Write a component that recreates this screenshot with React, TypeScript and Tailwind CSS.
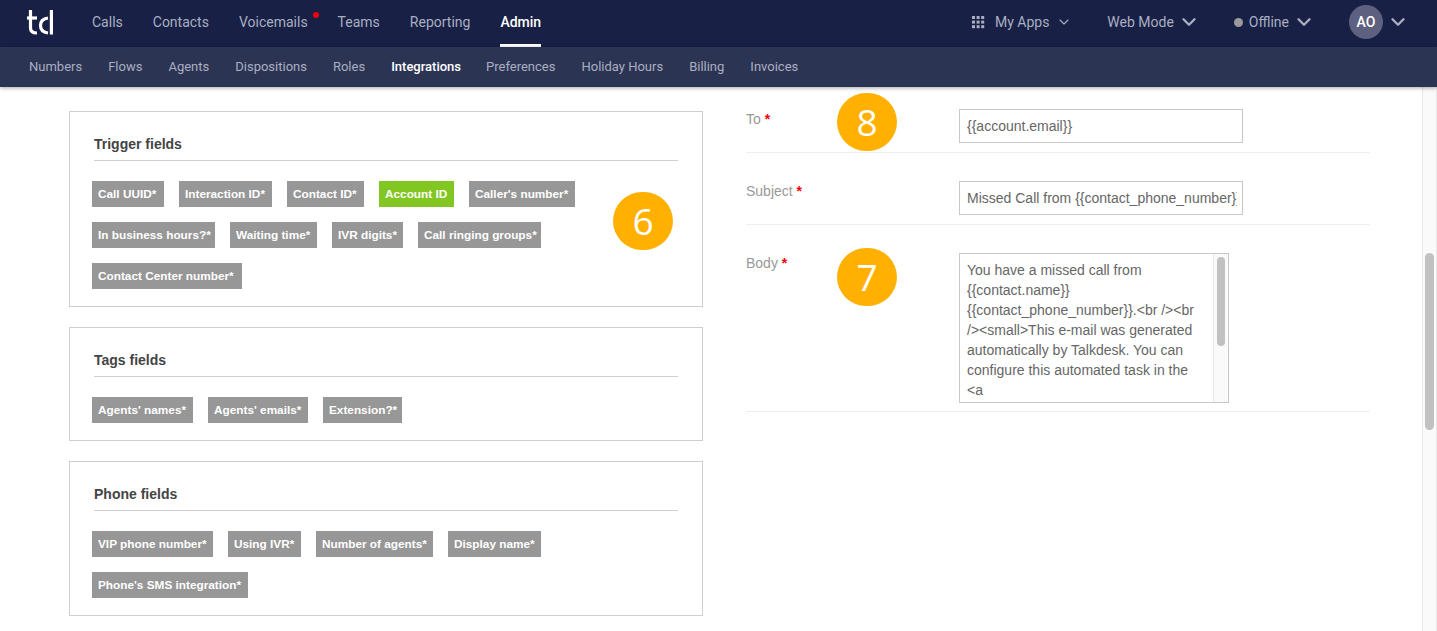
import { ChevronDown } from "lucide-react";

const mainNav = ["Calls", "Contacts", "Voicemails", "Teams", "Reporting", "Admin"];
const subNav = ["Numbers", "Flows", "Agents", "Dispositions", "Roles", "Integrations", "Preferences", "Holiday Hours", "Billing", "Invoices"];

type T = [string, string];

const trigger: T[] = [
  ["Call UUID*", "w-[72px]"],
  ["Interaction ID*", "w-[93px]"],
  ["Contact ID*", "w-[77px]"],
  ["Account ID", "w-[75px]"],
  ["Caller's number*", "w-[106px]"],
  ["In business hours?*", "w-[123px]"],
  ["Waiting time*", "w-[87px]"],
  ["IVR digits*", "w-[71px]"],
  ["Call ringing groups*", "w-[123px]"],
  ["Contact Center number*", "w-[150px]"],
];
const tagsF: T[] = [
  ["Agents' names*", "w-[101px]"],
  ["Agents' emails*", "w-[100px]"],
  ["Extension?*", "w-[79px]"],
];
const phone: T[] = [
  ["VIP phone number*", "w-[121px]"],
  ["Using IVR*", "w-[73px]"],
  ["Number of agents*", "w-[117px]"],
  ["Display name*", "w-[93px]"],
  ["Phone's SMS integration*", "w-[156px]"],
];

function Tag({ label, width, green }: { label: string; width: string; green?: boolean }) {
  return (
    <span className={`h-[26px] pl-[6px] pt-[2px] flex items-center text-[11.8px] font-bold text-white whitespace-nowrap ${width} ${green ? "bg-[#82c622]" : "bg-[#979797]"}`}>
      {label}
    </span>
  );
}

function Box({ title, tags, className }: { title: string; tags: T[]; className: string }) {
  return (
    <section className={`border border-[#cfcfcf] pl-[22px] pr-[24px] pt-[24px] ${className}`}>
      <h3 className="ml-[2px] h-[25px] border-b border-[#cfcfcf] text-[14px] leading-[17px] font-bold text-[#444444]">{title}</h3>
      <div className="mt-[20px] flex flex-wrap gap-x-[15px] gap-y-[15px] w-[510px]">
        {tags.map(([t, w]) => (
          <Tag key={t} label={t} width={w} green={t === "Account ID"} />
        ))}
      </div>
    </section>
  );
}

function Badge({ n, className }: { n: string; className: string }) {
  return (
    <div className={`absolute w-[60px] h-[58px] rounded-full bg-[#ffb000] text-white flex items-center justify-center text-[37px] font-['Open_Sans',sans-serif] ${className}`}>
      {n}
    </div>
  );
}

function Label({ text }: { text: string }) {
  return (
    <label className="w-[213px] shrink-0 text-[14px] leading-[20px] text-[#999999]">
      {text} <span className="text-[#f00000] font-bold">*</span>
    </label>
  );
}

export default function App() {
  return (
    <div className="w-[1437px] h-[631px] overflow-hidden bg-white flex flex-col relative font-['Liberation_Sans',sans-serif]">
      <header className="h-[47px] shrink-0 bg-[#182046] flex items-stretch font-['Roboto',sans-serif] text-[14px] text-[#a9afc0]">
        <svg className="ml-[27px] mt-[10px]" width="26" height="25" viewBox="0 0 26 25" fill="none" stroke="#ffffff" strokeWidth="3.2">
          <path d="M3.5 0 V18 Q3.5 23 10 23" />
          <path d="M0 8 H10" />
          <path d="M21 8 Q13.5 9 13.5 15.5 Q13.5 22 21 23" />
          <path d="M24.4 0 V24.5" />
        </svg>
        <nav className="ml-[39px] flex gap-[30px]">
          {mainNav.map((n) => (
            <a
              key={n}
              className={`relative h-[47px] pt-[13px] leading-[18px] ${n === "Admin" ? "text-white font-medium border-b-[3px] border-white" : ""}`}
            >
              {n}
              {n === "Voicemails" && <span className="absolute right-[-11px] top-[12px] w-[6px] h-[6px] rounded-full bg-[#f0000f]" />}
            </a>
          ))}
        </nav>
        <div className="ml-auto flex items-center pb-[3px]">
          <svg width="13" height="13" viewBox="0 0 13 13" fill="#a9afc0">
            {[0, 4.6, 9.2].flatMap((x) =>
              [0, 4.6, 9.2].map((y) => <rect key={`${x}-${y}`} x={x} y={y} width="3" height="3" />)
            )}
          </svg>
          <span className="ml-[10px]">My Apps</span>
          <ChevronDown className="ml-[7px]" size={16} strokeWidth={1.6} />
          <span className="ml-[35px]">Web Mode</span>
          <ChevronDown className="ml-[4px]" size={22} strokeWidth={2.6} />
          <span className="ml-[34px] w-[9px] h-[9px] rounded-full bg-[#9a9a9a]" />
          <span className="ml-[6px]">Offline</span>
          <ChevronDown className="ml-[4px]" size={22} strokeWidth={2.6} />
          <span className="ml-[34px] w-[34px] h-[34px] rounded-full bg-[#5d617f] text-white flex items-center justify-center font-medium">AO</span>
          <ChevronDown className="ml-[4px] mr-[28px]" size={22} strokeWidth={2.6} />
        </div>
      </header>
      <nav className="h-[40px] shrink-0 bg-[#2c3454] shadow-[0_1px_4px_rgba(0,0,0,0.35)] z-10 flex items-center pl-[29px] gap-[26px] font-['Roboto',sans-serif] text-[13px] text-[#a9afc0]">
        {subNav.map((n) => (
          <a key={n} className={n === "Integrations" ? "text-white font-medium -mr-px" : ""}>
            {n}
          </a>
        ))}
      </nav>
      <div className="flex-1 min-h-0 flex">
        <main className="flex-1 flex min-w-0">
          <div className="ml-[69px] mt-[24px] w-[634px] shrink-0 flex flex-col gap-[20px]">
            <Box className="h-[196px]" title="Trigger fields" tags={trigger} />
            <Box className="h-[114px]" title="Tags fields" tags={tagsF} />
            <Box className="h-[155px]" title="Phone fields" tags={phone} />
          </div>
          <div className="ml-[43px] w-[624px] shrink-0 text-[#666666] text-[14px]">
            <div className="h-[66px] pt-[22px] flex border-b border-[#eeeeee]">
              <Label text="To" />
              <div className="w-[284px] h-[34px] border border-[#c8c8c8] px-[7px] flex items-center pt-[1px]">{"{{account.email}}"}</div>
            </div>
            <div className="h-[72px] pt-[28px] flex border-b border-[#eeeeee]">
              <Label text="Subject" />
              <div className="w-[284px] h-[34px] border border-[#c8c8c8] pl-[7px] pr-[5px] flex items-center overflow-hidden whitespace-nowrap">
                <span className="block overflow-hidden">{"Missed Call from {{contact_phone_number}}"}</span>
              </div>
            </div>
            <div className="h-[187px] pt-[28px] flex border-b border-[#eeeeee]">
              <Label text="Body" />
              <div className="w-[270px] h-[150px] border border-[#c8c8c8] flex overflow-hidden">
                <div className="flex-1 min-w-0 pl-[7px] pr-[10px] pt-[6px] leading-[20px] break-words">
                  You have a missed call from {"{{contact.name}}"} {"{{contact_phone_number}}"}.&lt;br /&gt;&lt;br /&gt;&lt;small&gt;This e-mail was generated automatically by Talkdesk. You can configure this automated task in the &lt;a
                </div>
                <div className="w-[15px] shrink-0 bg-[#fafafa] border-l border-[#e8e8e8] pt-[3px] pl-[3px]">
                  <div className="w-[8px] h-[89px] rounded-full bg-[#c1c1c1]" />
                </div>
              </div>
            </div>
          </div>
        </main>
        <aside className="w-[15px] shrink-0 bg-[#fafafa] border-x border-[#e8e8e8] pl-[2px] pt-[166px]">
          <div className="w-[9px] h-[177px] rounded-full bg-[#c1c1c1]" />
        </aside>
      </div>
      <Badge n="6" className="left-[613px] top-[192px]" />
      <Badge n="8" className="left-[837px] top-[93px]" />
      <Badge n="7" className="left-[837px] top-[248px]" />
    </div>
  );
}
